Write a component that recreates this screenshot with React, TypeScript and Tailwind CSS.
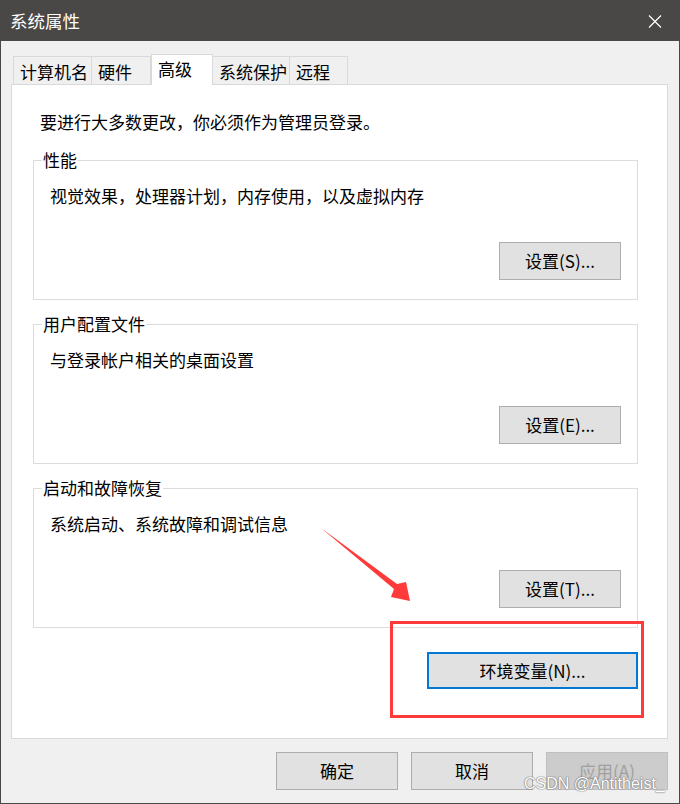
import React from "react";

const tabs = [
  { label: "计算机名", w: "w-[79px]" },
  { label: "硬件", w: "w-[60px]" },
  { label: "高级", w: "w-[62px]", active: true },
  { label: "系统保护", w: "w-[78px]" },
  { label: "远程", w: "w-[59px]" },
];

function WinButton({ children, disabled, focused, className = "" }: { children: React.ReactNode; disabled?: boolean; focused?: boolean; className?: string }) {
  let look = "bg-[#e1e1e1] border border-[#adadad] text-black";
  if (disabled) look = "bg-[#cccccc] border border-[#bfbfbf] text-[#a0a0a0]";
  if (focused) look = "bg-[#e1e1e1] border-2 border-[#0078d7] text-black";
  return (
    <div className={`flex items-center justify-center text-[17px] leading-[22px] ${look} ${className}`}>
      {children}
    </div>
  );
}

function GroupBox({ title, desc, button }: { title: string; desc: string; button: string }) {
  return (
    <div className="relative ml-[21px] w-[605px] h-[140px] border border-[#dcdcdc] flex flex-col">
      <span className="absolute left-[8px] top-[-12px] bg-white px-[1px] leading-[22px]">{title}</span>
      <div className="pt-[24px] pl-[16px] leading-[22px]">{desc}</div>
      <div className="mt-auto flex justify-end pr-[16px] pb-[19px]">
        <WinButton className="w-[122px] h-[38px]">{button}</WinButton>
      </div>
    </div>
  );
}

export default function App() {
  return (
    <div className="relative w-[680px] h-[804px] bg-[#f0f0f0] border border-[#4a4846] flex flex-col text-[17px] text-black font-['Noto_Sans_CJK_SC','Microsoft_YaHei',sans-serif]">
      {/* title bar */}
      <div className="h-[40px] bg-[#4a4846] flex items-center justify-between pl-[9px] pr-[17px]">
        <span className="text-white text-[17.5px] leading-[22px]">系统属性</span>
        <svg width="14" height="13" viewBox="0 0 14 13" className="mt-[1px]">
          <path d="M1 0.5 L13 12.5 M13 0.5 L1 12.5" stroke="white" strokeWidth="1.2" fill="none" />
        </svg>
      </div>

      <div className="flex-1 flex flex-col pl-[10px] pr-[11px]">
        {/* tabs */}
        <div className="flex items-end pt-[13px] ml-[2px]">
          {tabs.map((t) =>
            t.active ? (
              <div
                key={t.label}
                className={`${t.w} h-[31px] -mb-[1px] relative z-10 bg-white border border-b-0 border-[#d9d9d9] pl-[6px] pt-[3px] leading-[22px] text-[17px]`}
              >
                {t.label}
              </div>
            ) : (
              <div
                key={t.label}
                className={`${t.w} h-[28px] bg-[#f0f0f0] border border-b-0 border-[#d9d9d9] -ml-[1px] first:ml-0 pl-[6px] pt-[4px] leading-[22px] text-[17px]`}
              >
                {t.label}
              </div>
            )
          )}
        </div>

        {/* panel */}
        <div className="w-[657px] h-[655px] bg-white border border-[#d9d9d9] flex flex-col">
          <div className="pt-[26px] pl-[28px] leading-[22px]">要进行大多数更改，你必须作为管理员登录。</div>
          <div className="mt-[27px] flex flex-col gap-[24px]">
            <GroupBox title="性能" desc="视觉效果，处理器计划，内存使用，以及虚拟内存" button="设置(S)..." />
            <GroupBox title="用户配置文件" desc="与登录帐户相关的桌面设置" button="设置(E)..." />
            <GroupBox title="启动和故障恢复" desc="系统启动、系统故障和调试信息" button="设置(T)..." />
          </div>
          <div className="mt-[24px] flex justify-end pr-[29px]">
            <WinButton focused className="w-[211px] h-[37px]">环境变量(N)...</WinButton>
          </div>
        </div>

        {/* dialog buttons */}
        <div className="mt-[13px] flex justify-end gap-[13px]">
          <WinButton className="w-[122px] h-[38px]">确定</WinButton>
          <WinButton className="w-[122px] h-[38px]">取消</WinButton>
          <WinButton disabled className="w-[122px] h-[38px]">应用(A)</WinButton>
        </div>
      </div>

      {/* annotations */}
      <div className="absolute left-[389px] top-[620px] w-[254px] h-[97px] border-[3px] border-[#ff3a3a] pointer-events-none" />
      <svg className="absolute left-[-1px] top-[-1px] pointer-events-none" width="680" height="804" viewBox="0 0 680 804">
        <polygon
          points="321,528 397,584 406,582 410,601 391,597 394,589"
          fill="#ff3a3a"
        />
      </svg>
      <span className="absolute left-[523px] top-[772px] text-[16px] leading-[22px] text-white font-['Liberation_Sans',sans-serif] [text-shadow:0_0_1.5px_#666,0_0_1px_#666]">
        CSDN @Antitheist_
      </span>
    </div>
  );
}
